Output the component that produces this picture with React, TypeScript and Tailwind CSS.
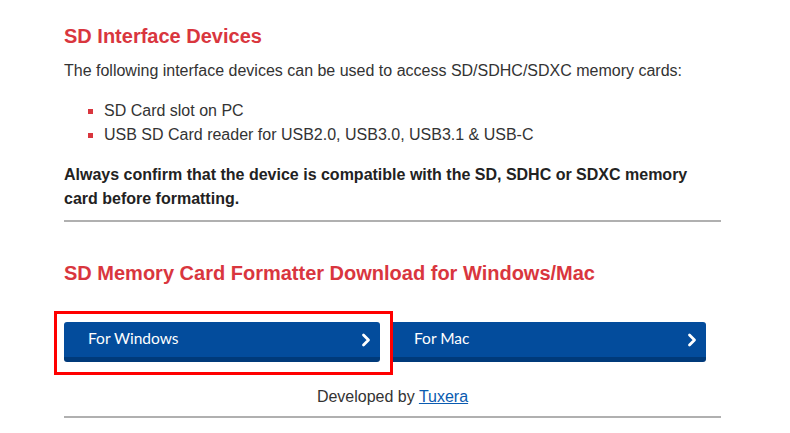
import React from 'react';

const ChevronRight: React.FC = () => (
  <svg width="10" height="14" viewBox="0 0 10 14" fill="none" aria-hidden="true">
    <path d="M2.5 2l5 5-5 5" stroke="white" strokeWidth="2.8" strokeLinecap="round" strokeLinejoin="round" />
  </svg>
);

const DownloadButton: React.FC<{ label: string }> = ({ label }) => (
  <a
    href="#"
    className="flex h-[40px] w-[316px] items-center justify-between rounded-[3px] border-b-[5px] border-[#003a7a] bg-[#034c9c] pl-[24px] pr-[9px] text-[15.5px] text-white"
    style={{ fontFamily: 'Lato, "Open Sans", sans-serif' }}
  >
    <span className="pb-[2px]">{label}</span>
    <span>
      <ChevronRight />
    </span>
  </a>
);

export default function App() {
  return (
    <div
      className="min-h-[433px] w-[790px] bg-white pl-[64px] text-[#333333]"
      style={{ fontFamily: '"Liberation Sans", Arial, sans-serif' }}
    >
      <div className="w-[657px] pt-[22px]">
        <h2 className="text-[20px] font-bold leading-[28px] text-[#d9363e]">SD Interface Devices</h2>
        <p className="mt-[9px] text-[16px] leading-[24px]">
          The following interface devices can be used to access SD/SDHC/SDXC memory cards:
        </p>

        <ul className="mt-[16px] pl-[24px] text-[16px] leading-[24px]">
          {['SD Card slot on PC', 'USB SD Card reader for USB2.0, USB3.0, USB3.1 & USB-C'].map((item) => (
            <li key={item} className="flex items-center">
              <span className="mr-[11px] h-[5px] w-[5px] bg-[#d9363e]" />
              {item}
            </li>
          ))}
        </ul>

        <p className="mt-[16px] text-[16px] font-bold leading-[24px] text-[#222222]">
          Always confirm that the device is compatible with the SD, SDHC or SDXC memory
          <br />
          card before formatting.
        </p>

        <hr className="mt-[9px] border-0 border-t-2 border-[#b0b0b0]" />

        <h2 className="mt-[37px] text-[20px] font-bold leading-[28px] text-[#d9363e]">
          SD Memory Card Formatter Download for Windows/Mac
        </h2>

        <div className="relative mt-[35px] flex gap-[10px]">
          <DownloadButton label="For Windows" />
          <DownloadButton label="For Mac" />
          <div className="pointer-events-none absolute left-[-10px] top-[-11px] h-[64px] w-[339px] border-[3px] border-[#ff0000]" />
        </div>

        <p className="mt-[23px] text-center text-[16px] leading-[24px]">
          Developed by{' '}
          <a href="#" className="text-[#0a5bb0] underline">
            Tuxera
          </a>
        </p>

        <hr className="mt-[7px] border-0 border-t-2 border-[#b0b0b0]" />
      </div>
    </div>
  );
}
